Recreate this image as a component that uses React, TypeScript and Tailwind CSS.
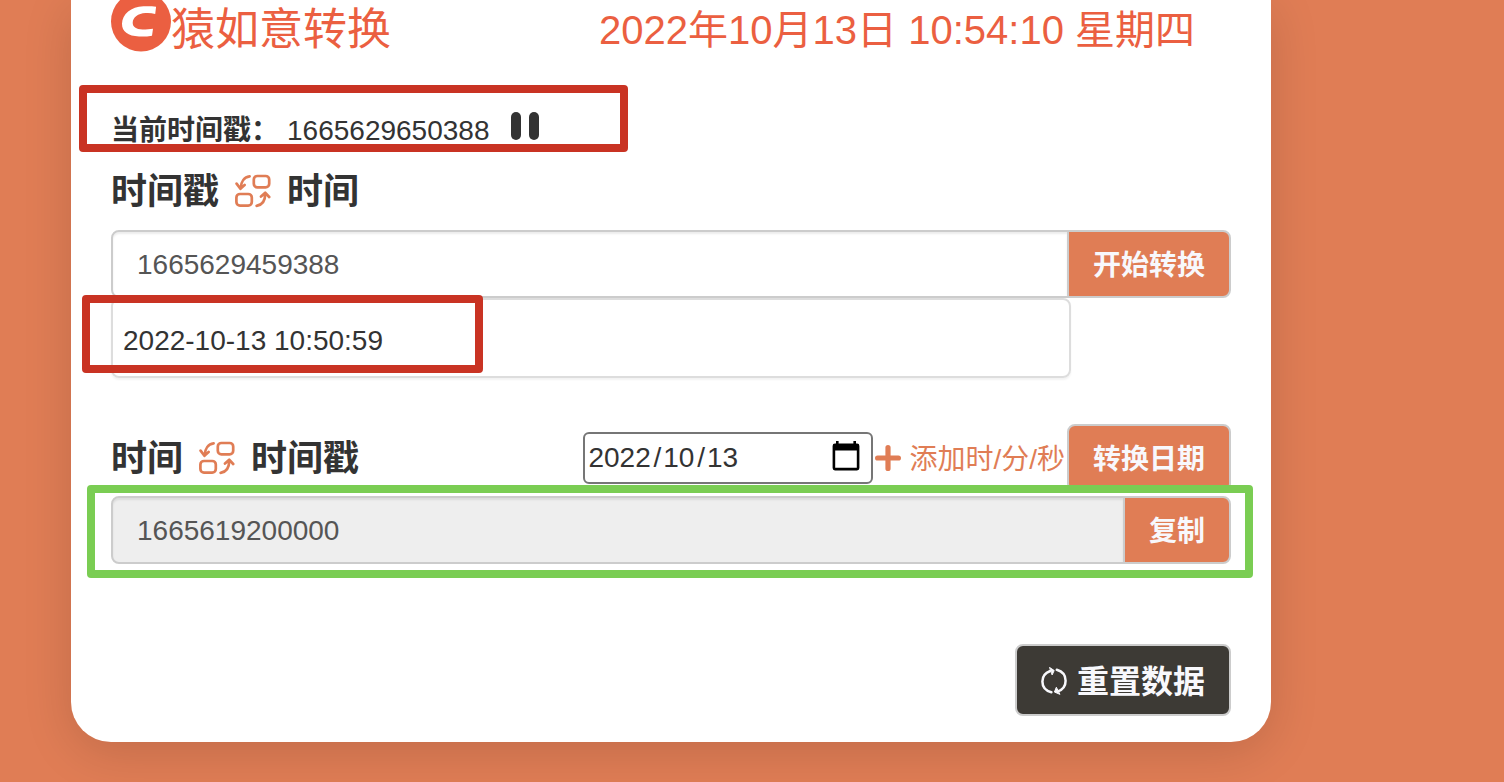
import React, { useState } from 'react'

const SwapIcon = () => (
    <svg className="h-9 w-9 shrink-0 text-[#e07d55]" viewBox="0 0 36 36" fill="none" stroke="currentColor" strokeWidth="2.7" strokeLinecap="round" strokeLinejoin="round" aria-hidden="true">
        <rect x="18.8" y="3" width="15.4" height="11.4" rx="3.6" />
        <rect x="1.4" y="21" width="15.4" height="11.6" rx="3.6" />
        <path d="M14.6 3.4C9.5 4 5.9 8.4 5.6 15.6M1.6 10.6L5.4 15.8L9.6 12" />
        <path d="M21.6 32.8C27 32 30.3 28 30.2 20.6M26 23.6L30.2 19.8L34.2 24" />
    </svg>
)

const LogoIcon = () => (
    <svg className="h-[52px] w-[60px] shrink-0" viewBox="0 0 60 52" aria-hidden="true">
        <circle cx="30" cy="21.5" r="30" fill="#eb5f41" />
        <path fill="#fff" d="M45.1 6.7L44.2 14C41 13.1 38 12.9 34.5 13.1C27 13.6 22 17.4 21.7 22.6C21.5 27 25 29.4 31.5 29.5C35.5 29.5 39 29.3 42 28.8L41 35.7C37 36.4 32.5 36.7 28 36.5C17 36.1 10.8 31.5 11 23.8C11.3 14 20 6.9 32.5 6.3C37 6.1 41 6.2 45.1 6.7Z" />
    </svg>
)

const CalendarIcon = () => (
    <svg className="h-[30px] w-7" viewBox="0 0 28 30" aria-hidden="true">
        <path fill="#000" fillRule="evenodd" d="M4 0h2.6v2.6h14.8V0H24v2.6h1a2.4 2.4 0 0 1 2.4 2.4v22a2.4 2.4 0 0 1-2.4 2.4H3A2.4 2.4 0 0 1 .6 27V5A2.4 2.4 0 0 1 3 2.6h1zM3.2 9.4v17.4h21.6V9.4z" />
    </svg>
)

const PlusIcon = () => (
    <svg className="h-[26px] w-[26px] shrink-0" viewBox="0 0 26 26" fill="none" stroke="currentColor" strokeWidth="5.2" strokeLinecap="round" aria-hidden="true">
        <path d="M13 2.6v20.8M2.6 13h20.8" />
    </svg>
)

const ResetIcon = () => (
    <svg className="h-7 w-7 shrink-0" viewBox="0 0 28 28" fill="none" stroke="currentColor" strokeWidth="2.5" strokeLinecap="round" aria-hidden="true">
        <path d="M10.4 25.2C4.6 23.6 1.4 19.4 1.4 14.4C1.4 9.6 4.4 5.8 9.2 4M15.8 2.8C21.4 4.4 24.6 8.8 24.6 13.8C24.6 18.6 21.8 22.6 17 24.4" />
        <path d="M8.8.6L13.2 3.5L11.3 7.6ZM18.6 27.2L13.4 25L15.2 20.6Z" fill="currentColor" strokeWidth="1" strokeLinejoin="round" />
    </svg>
)

const primaryButton = "shrink-0 border-2 border-[#ccc] bg-[#e07d55] px-6 pt-1 text-[28px] font-bold text-[#f8f8fc]"
const textField = "h-[68px] min-w-0 flex-1 rounded-l-lg border-2 border-[#ccc] px-6 pt-0.5 text-[28px] text-[#555] shadow-[inset_0_2px_2px_rgba(0,0,0,0.075)] outline-none"
const segment = "bg-transparent text-[28px] outline-none"

export default function App() {
    const [stamp, setStamp] = useState('1665629459388')
    const [year, setYear] = useState('2022')
    const [month, setMonth] = useState('10')
    const [day, setDay] = useState('13')

    return (
        <div className="min-h-screen overflow-hidden bg-[#e07d55] pr-[233px] pb-10 pl-[71px] font-['Liberation_Sans','Noto_Sans_CJK_SC',sans-serif] text-[#333]">
            <main className="rounded-b-[40px] bg-white px-10 pb-[26px] shadow-[0_10px_50px_rgba(0,0,0,0.14)]">
                <header className="flex items-start justify-between pr-9 text-[#eb5f41]">
                    <div className="flex items-start">
                        <LogoIcon />
                        <h1 className="text-[44px] leading-[60px]">猿如意转换</h1>
                    </div>
                    <time className="text-[40px] leading-[60px] whitespace-nowrap">2022年10月13日 10:54:10 星期四</time>
                </header>

                {/* Current timestamp */}
                <section className="relative mt-[50px] flex h-10 items-center text-[28px]">
                    <span className="pt-0.5 font-bold">当前时间戳：</span>
                    <span className="ml-2 pt-0.5">1665629650388</span>
                    <button type="button" aria-label="暂停" className="mb-2 ml-[22px] flex gap-2">
                        <span className="h-7 w-[10px] rounded-full bg-[#333]" />
                        <span className="h-7 w-[10px] rounded-full bg-[#333]" />
                    </button>
                    <div className="pointer-events-none absolute -top-[25px] -left-8 h-[67px] w-[549px] rounded border-8 border-[#c93323]" />
                </section>

                {/* Timestamp to time */}
                <section>
                    <h2 className="mt-[17px] flex h-12 items-center gap-4 text-[36px] font-bold">
                        <label htmlFor="stamp" className="pt-0.5">时间戳</label>
                        <SwapIcon />
                        <span className="pt-0.5">时间</span>
                    </h2>
                    <div className="mt-[15px] flex">
                        <input id="stamp" className={textField} value={stamp} onChange={(e) => setStamp(e.target.value)} />
                        <button type="button" className={`${primaryButton} -ml-0.5 rounded-r-lg`}>开始转换</button>
                    </div>
                    <div className="relative mr-40 flex h-20 items-center rounded-lg border-2 border-[#ddd] px-[10px] pt-1.5 text-[28px] shadow-[0_2px_2px_rgba(0,0,0,0.05)]">
                        <output htmlFor="stamp">2022-10-13 10:50:59</output>
                        <div className="pointer-events-none absolute -top-[5px] -left-[31px] h-[78px] w-[401px] rounded border-8 border-[#c93323]" />
                    </div>
                </section>

                {/* Time to timestamp */}
                <section className="mt-[46px]">
                    <div className="flex h-[68px] items-center">
                        <h2 className="mr-auto flex items-center gap-4 text-[36px] font-bold">
                            <span className="pt-0.5">时间</span>
                            <SwapIcon />
                            <label htmlFor="result" className="pt-0.5">时间戳</label>
                        </h2>
                        <div role="group" aria-label="日期" className="flex h-[52px] w-[290px] items-center rounded-md border-2 border-[#767676] px-[3px] text-[28px]">
                            <input aria-label="年" className={`${segment} w-[63px]`} value={year} onChange={(e) => setYear(e.target.value)} />
                            <span className="px-0.5">/</span>
                            <input aria-label="月" className={`${segment} w-8`} value={month} onChange={(e) => setMonth(e.target.value)} />
                            <span className="px-0.5">/</span>
                            <input aria-label="日" className={`${segment} w-8`} value={day} onChange={(e) => setDay(e.target.value)} />
                            <button type="button" aria-label="选择日期" className="mr-2 mb-1 ml-auto">
                                <CalendarIcon />
                            </button>
                        </div>
                        <button type="button" className="flex items-center gap-2 px-0.5 text-[28px] whitespace-nowrap text-[#e07d55]">
                            <PlusIcon />
                            <span className="pt-1">添加时/分/秒</span>
                        </button>
                        <button type="button" className={`${primaryButton} h-full rounded-lg`}>转换日期</button>
                    </div>
                    <div className="relative mt-1 flex">
                        <input id="result" className={`${textField} bg-[#eee]`} value="1665619200000" readOnly />
                        <button type="button" className={`${primaryButton} -ml-0.5 rounded-r-lg`}>复制</button>
                        <div className="pointer-events-none absolute -top-[11px] -right-[22px] -left-6 h-[93px] rounded border-8 border-[#7acd53]" />
                    </div>
                </section>

                <div className="mt-20 flex justify-end">
                    <button type="button" className="flex h-[72px] items-center gap-2 rounded-lg border-2 border-[#ccc] bg-[#3d3a35] px-6 pt-0.5 text-[32px] font-bold text-[#f8f8fc]">
                        <ResetIcon />
                        <span className="pt-0.5">重置数据</span>
                    </button>
                </div>
            </main>
        </div>
    )
}
